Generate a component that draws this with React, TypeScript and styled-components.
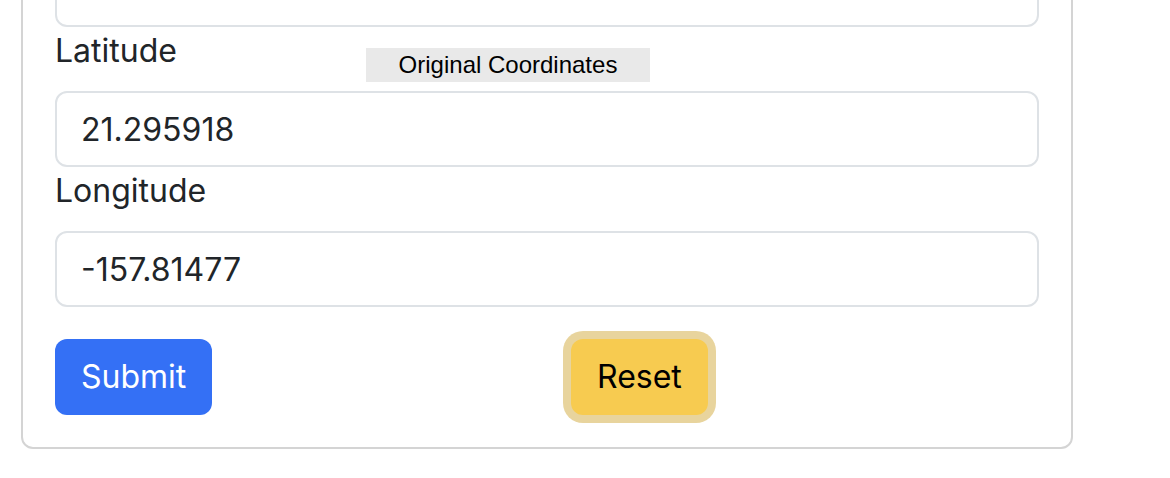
import React from "react";
import styled, { createGlobalStyle } from "styled-components";

const Global = createGlobalStyle`
  html, body { margin: 0; padding: 0; background: #fff; overflow: hidden; }
  body { font-family: Inter, "Noto Sans", sans-serif; color: #212529; }
  * { box-sizing: border-box; }
`;

const Card = styled.div`
  margin: -83px 0 0 21px;
  width: 1052px;
  border: 2px solid #d4d4d4;
  border-radius: 12px;
  padding: 32px;
  display: flex;
  flex-direction: column;
`;

const Group = styled.div`
  position: relative;
  display: flex;
  flex-direction: column;
`;

const Label = styled.label`
  font-size: 32px;
  line-height: 48px;
  margin-bottom: 16px;
  color: #212529;
`;

const Input = styled.input`
  height: 76px;
  width: 100%;
  border: 2px solid #dee2e6;
  border-radius: 12px;
  padding: 12px 24px;
  font-family: Inter, "Noto Sans", sans-serif;
  font-size: 32px;
  line-height: 48px;
  color: #212529;
  background: #fff;
  outline: none;
`;

const Badge = styled.span`
  position: absolute;
  left: 311px;
  top: 21px;
  width: 284px;
  height: 34px;
  background: #e9e9e9;
  font-family: "Liberation Sans", Arial, sans-serif;
  font-size: 24px;
  line-height: 34px;
  text-align: center;
  color: #000;
`;

const Actions = styled.div`
  display: grid;
  grid-template-columns: 1fr 1fr;
  column-gap: 48px;
  margin-top: 32px;
  align-items: start;
`;

const Button = styled.button<{ $variant: "primary" | "warning" }>`
  justify-self: start;
  height: 76px;
  padding: 12px 24px;
  border: 2px solid transparent;
  border-radius: 12px;
  font-family: Inter, "Noto Sans", sans-serif;
  font-size: 32px;
  line-height: 48px;
  cursor: pointer;
  background: ${(p) => (p.$variant === "primary" ? "#3470f5" : "#f7cb50")};
  color: ${(p) => (p.$variant === "primary" ? "#fff" : "#000")};
  box-shadow: ${(p) =>
    p.$variant === "warning" ? "0 0 0 8px rgba(210, 170, 60, 0.5)" : "none"};
`;

export default function App() {
  return (
    <>
      <Global />
      <Card>
        <Group>
          <Input defaultValue="" readOnly />
        </Group>
        <Group>
          <Label>Latitude</Label>
          <Badge>Original Coordinates</Badge>
          <Input defaultValue="21.295918" />
        </Group>
        <Group>
          <Label>Longitude</Label>
          <Input defaultValue="-157.81477" />
        </Group>
        <Actions>
          <Button $variant="primary">Submit</Button>
          <Button $variant="warning">Reset</Button>
        </Actions>
      </Card>
    </>
  );
}
